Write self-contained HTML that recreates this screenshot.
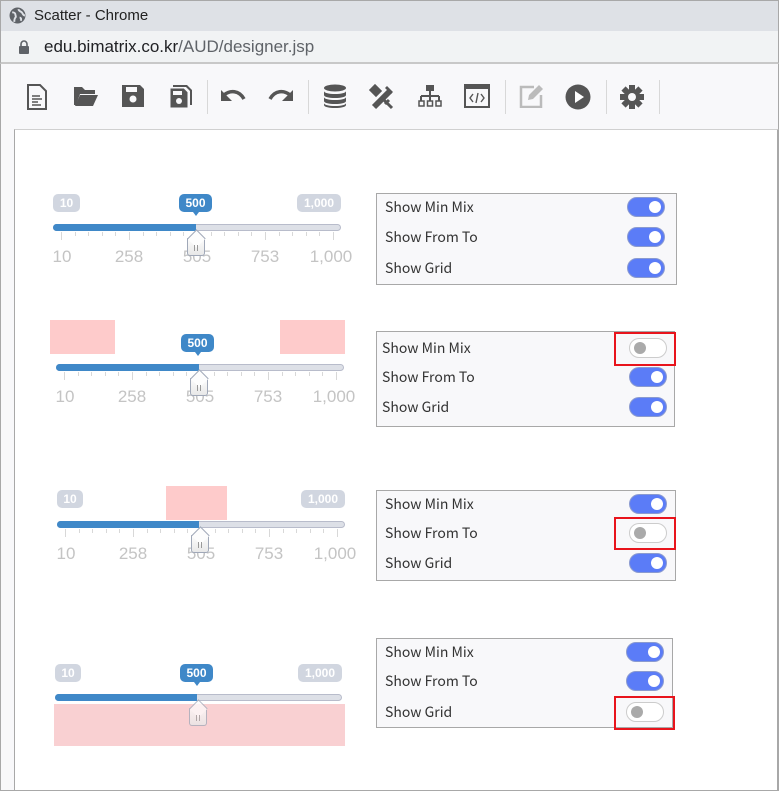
<!DOCTYPE html>
<html><head><meta charset="utf-8"><style>
*{box-sizing:border-box;margin:0;padding:0}
body{width:779px;height:791px;position:relative;overflow:hidden;background:#fff;font-family:"Liberation Sans","Noto Sans CJK KR",sans-serif}
.a{position:absolute}
.title{left:0;top:0;width:779px;height:31px;background:#dee1e6;border:1px solid #a8a8a8;border-bottom:none}
.addr{left:0;top:31px;width:779px;height:33px;background:#f1f3f4;border-left:1px solid #a8a8a8;border-right:1px solid #a8a8a8;border-bottom:2px solid #c8c8c8}
.tool{left:0;top:64px;width:779px;height:66px;background:#f8f8fa;border-left:1px solid #a8a8a8;border-right:1px solid #a8a8a8;border-bottom:1px solid #c8c8c8}
.content{left:14px;top:129px;width:765px;height:662px;border-left:1px solid #a8a8a8;border-right:2px solid #a8a8a8;border-bottom:1px solid #a8a8a8;border-top:1px solid #d0d0d0}
.leftside{left:0;top:129px;width:14px;height:662px;background:#f8f8fa;border-left:1px solid #a8a8a8;border-bottom:1px solid #a8a8a8}
.sep{width:1px;height:34px;background:#d8d8d8;top:80px}
.pill{height:18px;border-radius:5px;background:#d1d6e0;color:#fff;font-size:12px;font-weight:bold;text-align:center;line-height:18px}
.pill.b{background:#3f88c8}
.pill.b:after{content:"";position:absolute;left:50%;margin-left:-3px;top:18px;border:3px solid transparent;border-top:4px solid #3f88c8}
.track{height:7px;border-radius:4px;background:#dde0e7;border:1px solid #b8bccb}
.fill{position:absolute;left:-1px;top:-1px;height:7px;border-radius:4px 0 0 4px;background:#3f88c8}
.tk{position:absolute;width:1px;background:#d8d8d8}
.tl{position:absolute;color:#c4c4c4;font-size:17px;text-align:center;width:60px;margin-left:-30px}
.handle{width:18px;height:18px;border:1px solid #a0a8b8;border-top:none;background:linear-gradient(#fdfdfd,#e8e8e8);border-radius:0 0 3px 3px}
.handle:before{content:"";position:absolute;left:2px;top:-6px;width:12px;height:12px;transform:rotate(45deg);border-left:1px solid #a0a8b8;border-top:1px solid #a0a8b8;background:#fdfdfd}
.handle:after{content:"";position:absolute;left:6px;top:7px;width:2px;height:6px;border-left:1px solid #999;border-right:1px solid #999}
.pink{background:#fecbcb}
.panel{background:#f8f8fa;border:1px solid #a8a8a8}
.lab{position:absolute;font-size:14px;color:#333;line-height:16px;font-family:"Noto Sans CJK KR","Liberation Sans",sans-serif}
.tg{position:absolute;width:38px;height:20px;border-radius:10px;background:#5b7cf7;border:1px solid #8a9ad0}
.tg:after{content:"";position:absolute;right:3px;top:3px;width:12px;height:12px;border-radius:50%;background:#fff}
.tg.off{background:#fff;border-color:#ccc}
.tg.off:after{right:auto;left:4px;background:#aaa}
.red{border:2px solid #e8141c}
.ic{position:absolute;top:84px}
</style></head><body>
<div class="a title"></div>
<svg class="a" style="left:9px;top:7px" width="17" height="17" viewBox="0 0 16 16"><circle cx="8" cy="8" r="7.5" fill="#5f6368"/><path d="M3 5c2 0 3 1 3 2s1 2 0 3-1 3-1 4M9 2c0 2 2 2 3 3s1 3 3 3M10 10c1 0 2 1 1 3" stroke="#dee1e6" stroke-width="1.8" fill="none"/></svg>
<div class="a" style="left:34px;top:7px;font-size:15px;color:#222">Scatter - Chrome</div>
<div class="a addr"></div>
<svg class="a" style="left:18px;top:40px" width="12" height="14" viewBox="0 0 12 14"><rect x="1" y="6" width="10" height="8" rx="1" fill="#5f6368"/><path d="M3 6V4a3 3 0 016 0v2" stroke="#5f6368" stroke-width="1.6" fill="none"/></svg>
<div class="a" style="left:44px;top:37px;font-size:17px;color:#202124">edu.bimatrix.co.kr<span style="color:#5f6368">/AUD/designer.jsp</span></div>
<div class="a tool"></div>
<svg class="ic" style="left:26px" width="22" height="26" viewBox="0 0 22 26"><path d="M2 1h12l6 6v18H2z" fill="none" stroke="#555" stroke-width="2"/><path d="M6 12h8M6 15h10M6 18h6M6 21h9" stroke="#555" stroke-width="1.5"/></svg>
<svg class="ic" style="left:73px" width="26" height="24" viewBox="0 0 26 24"><path d="M1 3h8l3 3h10v4H7L3 21H1z" fill="#555"/><path d="M7 11h18l-5 11H2z" fill="#555"/></svg>
<svg class="ic" style="left:121px" width="24" height="24" viewBox="0 0 24 24"><path d="M1 1h18l4 4v18H1z" fill="#555"/><rect x="5" y="3" width="11" height="5" fill="#f8f8fa"/><circle cx="12" cy="15" r="3.5" fill="#f8f8fa"/></svg>
<svg class="ic" style="left:167px" width="26" height="26" viewBox="0 0 26 26"><path d="M6 1h14l5 5v15h-2V7l-4-4H6z" fill="#555"/><path d="M3 4h14l4 4v16H3z" fill="#555" stroke="#f8f8fa" stroke-width="1"/><rect x="6" y="7" width="9" height="4" fill="#f8f8fa"/><circle cx="12" cy="17" r="3" fill="#f8f8fa"/></svg>
<div class="a sep" style="left:207px"></div>
<svg class="ic" style="left:220px;top:89px" width="26" height="16" viewBox="0 0 26 16"><path d="M4 6c6-5 15-5 20 4" stroke="#555" stroke-width="3.5" fill="none"/><path d="M1 1v11h11z" fill="#555"/></svg>
<svg class="ic" style="left:268px;top:89px" width="26" height="16" viewBox="0 0 26 16"><path d="M22 6c-6-5-15-5-20 4" stroke="#555" stroke-width="3.5" fill="none"/><path d="M25 1v11H14z" fill="#555"/></svg>
<div class="a sep" style="left:308px"></div>
<svg class="ic" style="left:323px" width="24" height="26" viewBox="0 0 24 26"><ellipse cx="12" cy="4" rx="11" ry="3.5" fill="#555"/><path d="M1 7c0 4 22 4 22 0v4c0 4-22 4-22 0zM1 13c0 4 22 4 22 0v4c0 4-22 4-22 0zM1 19c0 4 22 4 22 0v2c0 4-22 4-22 0z" fill="#555"/></svg>
<svg class="ic" style="left:369px" width="26" height="26" viewBox="0 0 26 26"><path d="M4 22L20 6M6 24L22 8" stroke="#555" stroke-width="3"/><path d="M2 6l4-4 5 5-4 4zM15 16l8 8M16 20l4-4" stroke="#555" stroke-width="3" fill="#555"/><path d="M18 2l6 6-2 2-6-6z" fill="#555"/></svg>
<svg class="ic" style="left:418px" width="24" height="24" viewBox="0 0 24 24"><rect x="8" y="1" width="8" height="6" fill="#555"/><path d="M12 7v5M3 12h18M3 12v5M12 12v5M21 12v5" stroke="#555" stroke-width="2"/><rect x="1" y="17" width="5" height="5" fill="none" stroke="#555" stroke-width="1.5"/><rect x="9.5" y="17" width="5" height="5" fill="none" stroke="#555" stroke-width="1.5"/><rect x="18" y="17" width="5" height="5" fill="none" stroke="#555" stroke-width="1.5"/></svg>
<svg class="ic" style="left:464px" width="26" height="24" viewBox="0 0 26 24"><rect x="1" y="1" width="24" height="22" fill="none" stroke="#555" stroke-width="2"/><rect x="1" y="1" width="24" height="4" fill="#555"/><path d="M9 10l-3 4 3 4M17 10l3 4-3 4M14 9l-2 10" stroke="#555" stroke-width="1.4" fill="none"/></svg>
<div class="a sep" style="left:505px"></div>
<svg class="ic" style="left:519px" width="26" height="24" viewBox="0 0 26 24"><path d="M15 3H2v20h20V11" stroke="#bbb" stroke-width="2.5" fill="none"/><path d="M9 16l1-5L20 1l4 4-10 10z" fill="#bbb"/></svg>
<svg class="ic" style="left:565px" width="26" height="26" viewBox="0 0 26 26"><circle cx="13" cy="13" r="12.5" fill="#555"/><path d="M10 7l9 6-9 6z" fill="#fff"/></svg>
<div class="a sep" style="left:606px"></div>
<svg class="ic" style="left:619px" width="26" height="26" viewBox="0 0 26 26"><g fill="#555"><circle cx="13" cy="13" r="8"/><rect x="10" y="1" width="6" height="24"/><rect x="10" y="1" width="6" height="24" transform="rotate(45 13 13)"/><rect x="10" y="1" width="6" height="24" transform="rotate(90 13 13)"/><rect x="10" y="1" width="6" height="24" transform="rotate(135 13 13)"/></g><circle cx="13" cy="13" r="4" fill="#f8f8fa"/></svg>
<div class="a sep" style="left:659px"></div>

<div class="a leftside"></div>
<div class="a content"></div>

<div class="a pill" style="left:53px;top:194px;width:27px">10</div>
<div class="a pill b" style="left:179px;top:194px;width:33px">500</div>
<div class="a pill" style="left:297px;top:194px;width:44px">1,000</div>
<div class="a track" style="left:53px;top:224px;width:288px"><div class="fill" style="width:143px"></div></div>
<div class="a" id="t1" style="left:61px;top:232px;width:0;height:0"></div>
<div class="a handle" style="left:187px;top:238px"></div>

<div class="a pink" style="left:50px;top:320px;width:65px;height:34px"></div>
<div class="a pink" style="left:280px;top:320px;width:65px;height:34px"></div>
<div class="a pill b" style="left:181px;top:334px;width:33px">500</div>
<div class="a track" style="left:56px;top:364px;width:288px"><div class="fill" style="width:143px"></div></div>
<div class="a" id="t2" style="left:64px;top:372px"></div>
<div class="a handle" style="left:190px;top:378px"></div>

<div class="a pill" style="left:57px;top:490px;width:26px">10</div>
<div class="a pink" style="left:166px;top:486px;width:61px;height:34px"></div>
<div class="a pill" style="left:301px;top:490px;width:44px">1,000</div>
<div class="a track" style="left:57px;top:521px;width:288px"><div class="fill" style="width:142px"></div></div>
<div class="a" id="t3" style="left:65px;top:529px"></div>
<div class="a handle" style="left:191px;top:535px"></div>

<div class="a pill" style="left:55px;top:664px;width:26px">10</div>
<div class="a pill b" style="left:180px;top:664px;width:33px">500</div>
<div class="a pill" style="left:298px;top:664px;width:44px">1,000</div>
<div class="a track" style="left:55px;top:694px;width:287px"><div class="fill" style="width:142px"></div></div>
<div class="a pink" style="left:54px;top:704px;width:291px;height:42px;background:#f9d0d2"></div>
<div class="a handle" style="left:189px;top:708px;opacity:.75"></div>

<div class="a panel" style="left:376px;top:193px;width:301px;height:92px"></div>
<div class="lab" style="left:385px;top:199px">Show Min Mix</div>
<div class="lab" style="left:385px;top:229px">Show From To</div>
<div class="lab" style="left:385px;top:260px">Show Grid</div>
<div class="tg" style="left:627px;top:197px"></div>
<div class="tg" style="left:627px;top:227px"></div>
<div class="tg" style="left:627px;top:258px"></div>

<div class="a panel" style="left:376px;top:331px;width:299px;height:96px"></div>
<div class="lab" style="left:382px;top:340px">Show Min Mix</div>
<div class="lab" style="left:382px;top:369px">Show From To</div>
<div class="lab" style="left:382px;top:399px">Show Grid</div>
<div class="a red" style="left:614px;top:332px;width:62px;height:34px"></div>
<div class="tg off" style="left:629px;top:338px"></div>
<div class="tg" style="left:629px;top:367px"></div>
<div class="tg" style="left:629px;top:397px"></div>

<div class="a panel" style="left:376px;top:490px;width:300px;height:91px"></div>
<div class="lab" style="left:385px;top:496px">Show Min Mix</div>
<div class="lab" style="left:385px;top:525px">Show From To</div>
<div class="lab" style="left:385px;top:555px">Show Grid</div>
<div class="a red" style="left:614px;top:517px;width:62px;height:33px"></div>
<div class="tg" style="left:629px;top:494px"></div>
<div class="tg off" style="left:629px;top:523px"></div>
<div class="tg" style="left:629px;top:553px"></div>

<div class="a panel" style="left:376px;top:638px;width:297px;height:90px"></div>
<div class="lab" style="left:385px;top:644px">Show Min Mix</div>
<div class="lab" style="left:385px;top:673px">Show From To</div>
<div class="lab" style="left:385px;top:704px">Show Grid</div>
<div class="a red" style="left:614px;top:696px;width:61px;height:34px"></div>
<div class="tg" style="left:626px;top:642px"></div>
<div class="tg" style="left:626px;top:671px"></div>
<div class="tg off" style="left:626px;top:702px"></div>

<script>
function ticks(id,w){var el=document.getElementById(id),h='';var labs=['10','258','505','753','1,000'];
for(var i=0;i<=20;i++){var x=Math.round(i*w/20);var maj=i%5==0;h+='<div class="tk" style="left:'+x+'px;top:0;height:'+(maj?8:4)+'px"></div>';
if(maj)h+='<div class="tl" style="left:'+(x+(i==0?1:i==20?-2:0))+'px;top:15px">'+labs[i/5]+'</div>';}
el.innerHTML=h;}
ticks('t1',272);ticks('t2',272);ticks('t3',272);
</script>
</body></html>
